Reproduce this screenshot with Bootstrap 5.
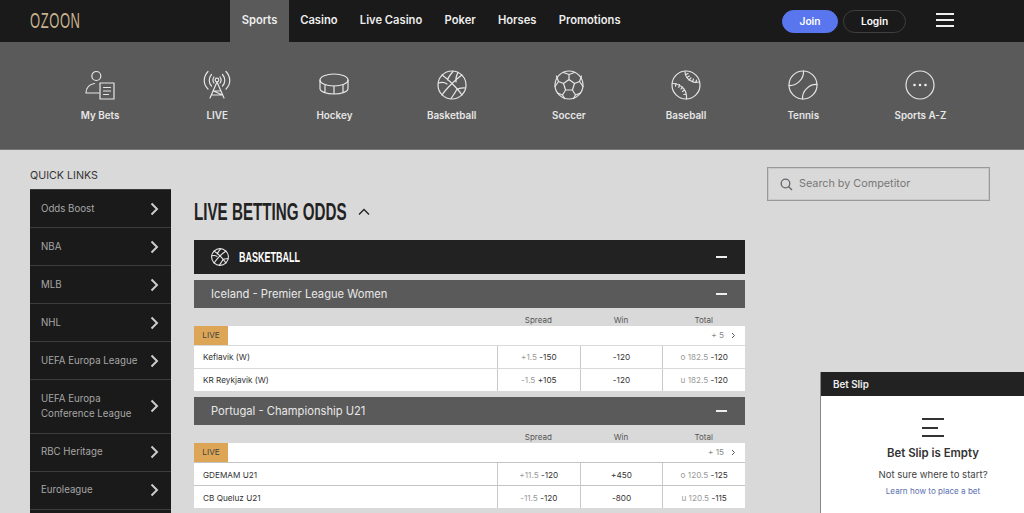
<!DOCTYPE html>
<html lang="en">
<head>
<meta charset="utf-8">
<title>Ozoon Sports</title>
<link rel="stylesheet" href="https://cdn.jsdelivr.net/npm/bootstrap@5.3.0/dist/css/bootstrap.min.css">
<style>
html,body{height:513px;overflow:hidden}
body{background:#d9d9d9;font-family:Inter,"Liberation Sans",sans-serif;color:#333}
.topbar{height:42px;background:#1a1a1a;padding:0}
.brandbox{width:200px;margin-left:30px;overflow:hidden}
.brandmark{color:#c8b28e;font:400 22px/42px "Liberation Sans",sans-serif;letter-spacing:1px;display:block;transform:scaleX(.59);transform-origin:left center;white-space:nowrap;margin-top:-1px}
.topnav a{display:block;color:#eee;font-size:11.2px;font-weight:600;line-height:41px;height:42px;padding:0 11.15px;text-decoration:none;white-space:nowrap}
.topnav a.on{background:#5a5a5a;width:59px;padding:0;text-align:center}
.authbox{margin-left:auto;margin-right:118px;gap:5px}
.joinbtn,.loginbtn{height:23px;padding:0;font-size:10.2px;font-weight:600;line-height:21px;border-radius:12px;color:#fff}
.joinbtn{width:56px;background:#5a76ee;border:1px solid #5a76ee}
.loginbtn{width:63px;background:transparent;border:1px solid #3f3f3f}
.burger{position:absolute;left:936px;top:13px;width:18px;height:14px;border-top:2px solid #eee;border-bottom:2px solid #eee}
.burger::after{content:"";display:block;height:2px;background:#eee;margin-top:4px}
.subnav{height:108px;background:#5a5a5a;border-bottom:1px solid #777;padding:28px 0 0 41.5px}
.subitem{width:117.2px;text-align:center;color:#e6e6e6;font-size:9.9px;font-weight:600;line-height:13px}
.subitem svg{display:block;margin:0 auto 9px;width:30px;height:30px}
.subitem svg *,.hicon *{fill:none;stroke:#e6e6e6;stroke-width:1.2;stroke-linecap:round;stroke-linejoin:round}
.hicon *{stroke-width:1.8}
.subitem svg .dot{fill:#eee;stroke:none}
.pagewrap{padding-left:30px;align-items:flex-start}
.sidecol{width:141px;margin-right:23px}
.qltitle{font-size:10.7px;color:#333;line-height:14px;margin-top:19px;margin-bottom:6px}
.sidelist{background:#1a1a1a;border-top:1px solid #3a3a3a}
.sidelist a{display:flex;align-items:center;justify-content:space-between;background:#1a1a1a;color:#a6a6a6;font-size:9.7px;line-height:15.5px;padding:0 12px 0 11px;height:38px;border-bottom:1px solid #3c3c3c;text-decoration:none}
.sidelist a.tall{height:53.5px}
.sidelist svg{width:9px;height:14px;flex:none}
.sidetail{height:6px;background:#1a1a1a}
.maincol{width:551px;padding-top:49px}
.bigtitle{font:700 23px/26px "Liberation Sans",sans-serif;color:#222;margin:0 0 15px;display:flex;align-items:center;gap:10px}
.bigtitle span{display:inline-block;width:154px;white-space:nowrap;transform:scaleX(.66);transform-origin:left center}
.sportbar{height:34px;background:#222;color:#fff;display:flex;align-items:center;padding:0 18px 0 17px;margin-bottom:6px}
.sportbar b{font:700 15px/16px "Liberation Sans",sans-serif;margin-left:10px;margin-bottom:1px;display:inline-block;width:62px;white-space:nowrap;transform:scaleX(.6);transform-origin:left center}
.hicon{width:18px;height:18px}
.minus{margin-left:auto;width:11px;height:2px;background:#eee}
.leaguebar{height:28px;background:#5a5a5a;color:#e8e8e8;font-size:11.2px;display:flex;align-items:center;padding:0 18px 0 17px}
.labelrow{display:flex;height:18px;align-items:flex-end;padding-left:303px;font-size:8px;color:#555;line-height:12px}
.labelrow span,.oddrow span.cellx{width:82.7px;text-align:center}
.liverow{height:19px;background:#fff;display:flex;align-items:stretch;margin-bottom:1px;font-size:8.2px;color:#888}
.livetag{width:34px;background:#dca656;color:#444;text-align:center;line-height:19px}
.morebit{margin-left:auto;line-height:19px;padding-right:9px;display:flex;align-items:center;gap:7px}
.oddrow{height:22px;background:#fff;display:flex;align-items:center;margin-bottom:1px;font-size:8.2px;color:#333}
.teamname{width:303px;padding-left:9px}
.oddrow span.cellx{height:100%;line-height:22px;border-left:1px solid #c9c9c9;color:#333;white-space:nowrap}
.oddrow i{font-style:normal;color:#999}
.oddgroup{background:#c4c4c4}
.oddgroup .teamname{padding-top:2px}
.oddgroup .oddrow span.cellx{line-height:24px}
.spacer6{height:5px}
.rightcol{margin-left:22px;padding-top:17px;width:223px}
.searchbox{height:34px;border:1px solid #999;box-shadow:inset 0 0 0 1px #c8c8c8;display:flex;align-items:center;gap:6px;padding-left:12px;color:#777;font-size:10.8px}
.betslip{position:absolute;left:820px;top:372px;width:225px;height:141px;background:#fff;border-left:1px solid #888;text-align:center}
.slipbar{height:24px;background:#222;color:#eee;font-size:9.8px;font-weight:600;line-height:25px;text-align:left;padding-left:12px}
.slipicon{width:22px;margin:22px auto 0 auto}
.slipicon div{height:2px;background:#333;margin-bottom:6.5px}
.slipicon div:nth-child(2){width:16px}
.sliptitle{font-size:11.4px;font-weight:600;color:#333;line-height:14px;margin-top:9px}
.sliptext{font-size:9.6px;color:#444;line-height:13px;margin-top:8px}
.sliplink{font-size:8.1px;color:#5b6fb0;line-height:12px;margin-top:4px;display:block;text-decoration:none}
</style>
</head>
<body>
<nav class="navbar topbar d-flex flex-nowrap align-items-center">
  <div class="brandbox"><a class="brandmark text-decoration-none" href="#">OZOON</a></div>
  <div class="topnav d-flex">
    <a class="on" href="#">Sports</a><a href="#">Casino</a><a href="#">Live Casino</a><a href="#">Poker</a><a href="#">Horses</a><a href="#">Promotions</a>
  </div>
  <div class="authbox d-flex">
    <button class="btn joinbtn">Join</button>
    <button class="btn loginbtn">Login</button>
  </div>
  <div class="burger"></div>
</nav>

<div class="subnav d-flex">
  <div class="subitem"><svg viewBox="0 0 30 30"><circle cx="11.300" cy="6" r="4.500"/><path d="M1 23H14M1 23C1 18 4 14.500 9.500 13.500"/><rect x="15" y="13" width="14" height="16"/><path d="M18.500 17.500h7M18.500 21h7M18.500 24.500h5"/></svg>My Bets</div>
  <div class="subitem"><svg viewBox="0 0 30 30"><circle cx="15" cy="10" r="1.800"/><path d="M15 12 8 28M15 12l7 16M11.200 21h7.600M9.500 25h11l-9-4M20.500 25l-9-4M9.500 4.500C6.500 8 6.500 13 9.500 16M20.500 4.500C23.500 8 23.500 13 20.500 16M6 1.500C1 7 1 14 6 19M24 1.500C29 7 29 14 24 19M12 7c-1.500 2-1.500 4 0 6M18 7c1.500 2 1.500 4 0 6"/></svg>LIVE</div>
  <div class="subitem"><svg viewBox="0 0 30 30"><ellipse cx="15" cy="10" rx="14" ry="6"/><path d="M1 10V18.500C1 21.500 7 24 15 24S29 21.500 29 18.500V10M6 15V22.500M15 16V24M24 15V22.500"/></svg>Hockey</div>
  <div class="subitem"><svg viewBox="0 0 30 30"><circle cx="15" cy="15" r="14"/><path d="M5 5C11 9 21 19 25 25M25 5C19 9 9 19 5 25M16 1.500C13 5 11 8 10.500 10M1.500 13C5 12 8 12.500 10 14M19.500 20C22 18 25 17.500 28.500 18M14 28.500C16 25.500 18 23 19.500 20M21 2.500C19 6 18.500 9 19 12"/></svg>Basketball</div>
  <div class="subitem"><svg viewBox="0 0 30 30"><circle cx="15" cy="15" r="14"/><path d="M15 9.500 20.500 13.500 18.400 20H11.600L9.500 13.500ZM15 9.500V4.500L9.500 2.500M15 4.500 20.500 2.500M20.500 13.500 25.500 11.500 27.500 6M25.500 11.500 29 16.500M9.500 13.500 4.500 11.500 2.500 6M4.500 11.500 1 16.500M18.400 20 21.500 25 19.500 28.500M21.500 25 26.500 23M11.600 20 8.500 25 10.500 28.500M8.500 25 3.500 23"/></svg>Soccer</div>
  <div class="subitem"><svg viewBox="0 0 30 30"><circle cx="15" cy="15" r="14"/><path d="M14 1.500C14 6 17 10 21 11.500 23 12.500 25.500 12.500 28 12M1.800 13.500C6 13.500 10 15.500 13 19 15 21.500 15.800 25 15.500 29M15 4.500 17 3.500M16 7.500 18.300 6M18 10 20 8M21.500 11.500 22.500 9M25 12.500 25.500 10M5 13.700 4.500 16.200M8.500 14.700 7.800 17.300M11.500 17 10 19M13.500 20 11.500 21.500M15 24 12.800 24.500"/></svg>Baseball</div>
  <div class="subitem"><svg viewBox="0 0 30 30"><circle cx="15" cy="15" r="14"/><path d="M15.500 1C16 9 9 16 1 15.500M29 14.500C21 14 14 21 14.500 29"/></svg>Tennis</div>
  <div class="subitem"><svg viewBox="0 0 30 30"><circle cx="15" cy="15" r="14"/><circle class="dot" cx="9.500" cy="15" r="1.300"/><circle class="dot" cx="15" cy="15" r="1.300"/><circle class="dot" cx="20.500" cy="15" r="1.300"/></svg>Sports A-Z</div>
</div>

<div class="pagewrap d-flex">
  <aside class="sidecol">
    <div class="qltitle">QUICK LINKS</div>
    <div class="sidelist">
      <a href="#">Odds Boost<svg viewBox="0 0 9 14"><path d="M1.500 1.500 7 7l-5.500 5.500" fill="none" stroke="#ccc" stroke-width="2"/></svg></a>
      <a href="#">NBA<svg viewBox="0 0 9 14"><path d="M1.500 1.500 7 7l-5.500 5.500" fill="none" stroke="#ccc" stroke-width="2"/></svg></a>
      <a href="#">MLB<svg viewBox="0 0 9 14"><path d="M1.500 1.500 7 7l-5.500 5.500" fill="none" stroke="#ccc" stroke-width="2"/></svg></a>
      <a href="#">NHL<svg viewBox="0 0 9 14"><path d="M1.500 1.500 7 7l-5.500 5.500" fill="none" stroke="#ccc" stroke-width="2"/></svg></a>
      <a href="#">UEFA Europa League<svg viewBox="0 0 9 14"><path d="M1.500 1.500 7 7l-5.500 5.500" fill="none" stroke="#ccc" stroke-width="2"/></svg></a>
      <a class="tall" href="#"><span>UEFA Europa<br>Conference League</span><svg viewBox="0 0 9 14"><path d="M1.500 1.500 7 7l-5.500 5.500" fill="none" stroke="#ccc" stroke-width="2"/></svg></a>
      <a href="#">RBC Heritage<svg viewBox="0 0 9 14"><path d="M1.500 1.500 7 7l-5.500 5.500" fill="none" stroke="#ccc" stroke-width="2"/></svg></a>
      <a href="#">Euroleague<svg viewBox="0 0 9 14"><path d="M1.500 1.500 7 7l-5.500 5.500" fill="none" stroke="#ccc" stroke-width="2"/></svg></a>
      <div class="sidetail"></div>
    </div>
  </aside>

  <main class="maincol">
    <h1 class="bigtitle"><span>LIVE BETTING ODDS</span><svg width="12" height="8" viewBox="0 0 12 8"><path d="M1 6.500 6 1.500l5 5" fill="none" stroke="#222" stroke-width="1.300"/></svg></h1>
    <div class="sportbar"><svg class="hicon" viewBox="0 0 30 30"><circle cx="15" cy="15" r="14"/><path d="M5 5C11 9 21 19 25 25M25 5C19 9 9 19 5 25M16 1.500C13 5 11 8 10.500 10M1.500 13C5 12 8 12.500 10 14M19.500 20C22 18 25 17.500 28.500 18M14 28.500C16 25.500 18 23 19.500 20"/></svg><b>BASKETBALL</b><div class="minus"></div></div>

    <div class="leaguebar">Iceland - Premier League Women<div class="minus"></div></div>
    <div class="labelrow"><span>Spread</span><span>Win</span><span>Total</span></div>
    <div class="liverow"><div class="livetag">LIVE</div><div class="morebit">+ 5 <svg width="5" height="7" viewBox="0 0 5 7"><path d="M1 1l2.500 2.500L1 6" fill="none" stroke="#555" stroke-width="1"/></svg></div></div>
    <div class="oddrow"><div class="teamname">Keflavik (W)</div><span class="cellx"><i>+1.5</i> -150</span><span class="cellx">-120</span><span class="cellx"><i>o 182.5</i> -120</span></div>
    <div class="oddrow"><div class="teamname">KR Reykjavik (W)</div><span class="cellx"><i>-1.5</i> +105</span><span class="cellx">-120</span><span class="cellx"><i>u 182.5</i> -120</span></div>
    <div class="spacer6"></div>

    <div class="leaguebar">Portugal - Championship U21<div class="minus"></div></div>
    <div class="labelrow"><span>Spread</span><span>Win</span><span>Total</span></div>
    <div class="oddgroup">
    <div class="liverow"><div class="livetag">LIVE</div><div class="morebit">+ 15 <svg width="5" height="7" viewBox="0 0 5 7"><path d="M1 1l2.500 2.500L1 6" fill="none" stroke="#555" stroke-width="1"/></svg></div></div>
    <div class="oddrow"><div class="teamname">GDEMAM U21</div><span class="cellx"><i>+11.5</i> -120</span><span class="cellx">+450</span><span class="cellx"><i>o 120.5</i> -125</span></div>
    <div class="oddrow"><div class="teamname">CB Queluz U21</div><span class="cellx"><i>-11.5</i> -120</span><span class="cellx">-800</span><span class="cellx"><i>u 120.5</i> -115</span></div>
    </div>
  </main>

  <aside class="rightcol">
    <div class="searchbox"><svg width="13" height="13" viewBox="0 0 13 13"><circle cx="5.500" cy="5.500" r="4.300" fill="none" stroke="#666" stroke-width="1.300"/><path d="M8.700 8.700 12 12" stroke="#666" stroke-width="1.300"/></svg>Search by Competitor</div>
  </aside>
</div>

<div class="betslip">
  <div class="slipbar">Bet Slip</div>
  <div class="slipicon"><div></div><div></div><div></div></div>
  <div class="sliptitle">Bet Slip is Empty</div>
  <div class="sliptext">Not sure where to start?</div>
  <a class="sliplink" href="#">Learn how to place a bet</a>
</div>
<script src="https://cdn.jsdelivr.net/npm/bootstrap@5.3.0/dist/js/bootstrap.bundle.min.js"></script>
</body>
</html>
